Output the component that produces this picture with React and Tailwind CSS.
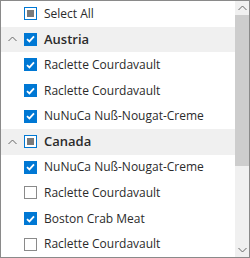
import React from "react";

const rows = [
  { label: "Select All", state: "indeterminate" },
  { label: "Austria", state: "checked", group: true },
  { label: "Raclette Courdavault", state: "checked" },
  { label: "Raclette Courdavault", state: "checked" },
  { label: "NuNuCa Nuß-Nougat-Creme", state: "checked" },
  { label: "Canada", state: "indeterminate", group: true },
  { label: "NuNuCa Nuß-Nougat-Creme", state: "checked" },
  { label: "Raclette Courdavault", state: "unchecked" },
  { label: "Boston Crab Meat", state: "checked" },
  { label: "Raclette Courdavault", state: "unchecked" },
];

function Box({ state }) {
  if (state === "checked") {
    return (
      <div className="w-[13px] h-[13px] bg-[#0078d4] flex items-center justify-center shrink-0">
        <svg width="9" height="8" viewBox="0 0 9 8">
          <path d="M1 4.2 L3.4 6.4 L8 1.4" fill="none" stroke="white" strokeWidth="1.8" />
        </svg>
      </div>
    );
  }
  if (state === "indeterminate") {
    return (
      <div className="w-[13px] h-[13px] border border-[#0078d4] bg-white flex items-center justify-center shrink-0">
        <div className="w-[7px] h-[7px] bg-[#7a7a7a]" />
      </div>
    );
  }
  return <div className="w-[13px] h-[13px] border border-[#8a8a8a] bg-white shrink-0" />;
}

function Chevron({ up }) {
  return (
    <svg width="9" height="6" viewBox="0 0 9 6">
      <path d={up ? "M0.5 5 L4.5 1 L8.5 5" : "M0.5 1 L4.5 5 L8.5 1"} fill="none" stroke="#666" strokeWidth="1" />
    </svg>
  );
}

export default function App() {
  return (
    <div
      className="w-[250px] h-[258px] border border-[#8a8a8a] bg-white flex overflow-hidden"
      style={{ fontFamily: '"Open Sans", "Noto Sans", sans-serif' }}
    >
      <div className="flex-1 flex flex-col">
        {rows.map((r, i) => (
          <div
            key={i}
            className={`h-[25.6px] flex items-center shrink-0 ${r.group ? "bg-[#f0f0f0]" : ""}`}
          >
            <div className="w-[23px] pl-[7px] flex items-center">{r.group && <Chevron up />}</div>
            <Box state={r.state} />
            <span
              className={`ml-[7px] whitespace-nowrap text-[#2b2b2b] ${
                r.group ? "text-[13px] font-semibold" : "text-[12px]"
              }`}
            >
              {r.label}
            </span>
          </div>
        ))}
      </div>
      <div className="w-[14px] bg-[#f0f0f0] flex flex-col">
        <div className="h-[14px] flex items-center justify-center">
          <Chevron up />
        </div>
        <div className="h-[151px] bg-[#cdcdcd]" />
        <div className="flex-1" />
        <div className="h-[14px] flex items-center justify-center">
          <Chevron />
        </div>
      </div>
    </div>
  );
}
